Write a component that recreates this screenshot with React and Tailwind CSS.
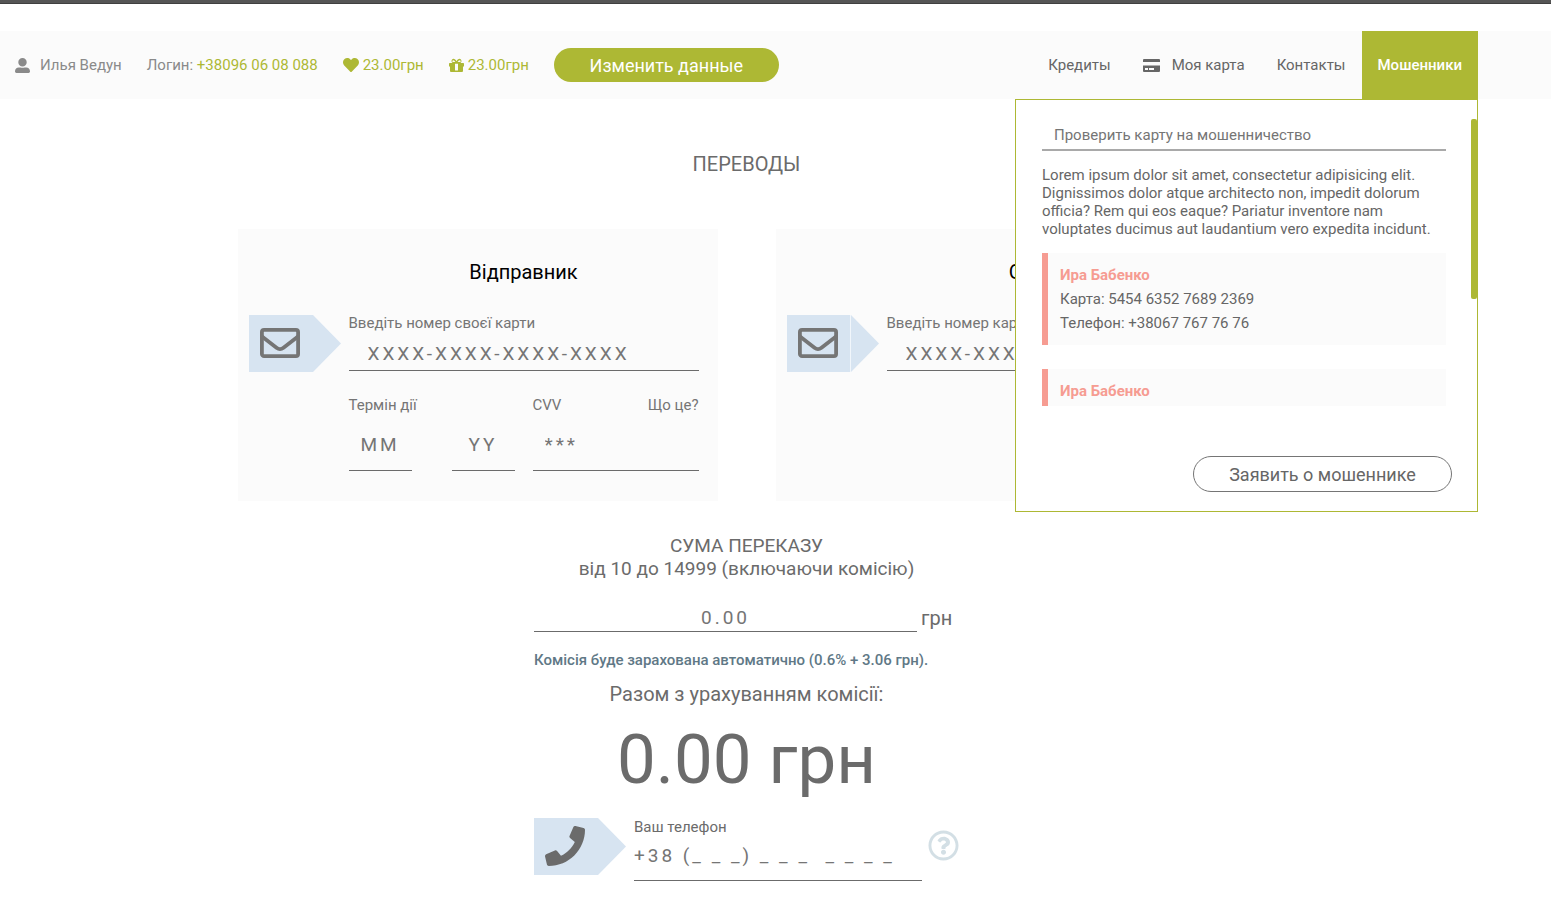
import { FaUserAlt, FaHeart, FaPhone, FaRegQuestionCircle } from "react-icons/fa";

const fieldClass =
  "block w-full border-b border-[#6b6b6b] bg-transparent text-[19px] leading-6 tracking-[3px] text-[#6b6b6b] outline-none placeholder:text-[#757575]";

function CardIcon() {
  return (
    <svg className="h-[13px] w-[17px]" viewBox="0 0 17 13" fill="currentColor" aria-hidden="true">
      <path d="M1 0h15a1 1 0 0 1 1 1v2H0V1a1 1 0 0 1 1-1Z" />
      <path
        fillRule="evenodd"
        d="M0 6.500h17V12a1 1 0 0 1-1 1H1a1 1 0 0 1-1-1ZM2 9v2h3V9ZM6 9v2h5V9Z"
      />
    </svg>
  );
}

function GiftIcon() {
  return (
    <svg className="size-[15px]" viewBox="0 0 15 15" fill="currentColor" aria-hidden="true">
      <path
        fillRule="evenodd"
        d="M.7 5H3.600A2.300 2.300 0 0 1 4.200.8C5.800.8 6.800 2 7.500 3.200 8.200 2 9.200.8 10.800.8A2.300 2.300 0 0 1 11.400 5H14.300a.7.7 0 0 1 .7.7V8.500H14V13a1 1 0 0 1-1 1H2a1 1 0 0 1-1-1V8.500H0V5.700A.7.7 0 0 1 .7 5ZM4.300 2.200a.9.9 0 0 0 0 1.900H6.500C5.800 3 5.100 2.200 4.300 2.200ZM10.700 2.200C9.900 2.200 9.200 3 8.500 4.100H10.700a.9.9 0 0 0 0-1.900ZM6 5.800V12a.6.6 0 0 0 .6.6H8.400A.6.6 0 0 0 9 12V5.800Z"
      />
    </svg>
  );
}

function EnvelopeIcon({ className }) {
  return (
    <svg className={className} viewBox="0 0 40 40" fill="none" stroke="currentColor" strokeWidth="3.800" aria-hidden="true">
      <rect x="1.900" y="6.900" width="36.200" height="26.200" rx="2.200" />
      <path d="M2 13.500L16.500 24.800Q20 27.500 23.500 24.800L38 13.500" />
    </svg>
  );
}

function ArrowBadge({ icon: Icon, seam = false, tone = "text-[#757575]" }) {
  return (
    <div className="grid h-[57px] w-[92px] shrink-0 items-start">
      <svg className="col-start-1 row-start-1 h-full w-full" viewBox="0 0 92 57" fill="#d7e4f1" aria-hidden="true">
        <path d="M0 0H64L92 28.500L64 57H0Z" />
        {seam && <path d="M63.500 0V57" stroke="#f1f6fb" strokeWidth="1" />}
      </svg>
      <Icon className={`col-start-1 row-start-1 mt-2 ml-[11px] size-10 ${tone}`} />
    </div>
  );
}

function TransferCard({ id, title, label, seam, children }) {
  return (
    <section className="flex w-[480px] bg-[#fbfbfb] pt-[31px] pr-[19px] pb-[30px] pl-[11px]">
      <div className="pt-[55px]">
        <ArrowBadge icon={EnvelopeIcon} seam={seam} />
      </div>
      <div className="ml-2 grow">
        <h2 className="text-center text-[20px] leading-6 text-black">{title}</h2>
        <label htmlFor={id} className="mt-[30px] block text-[15px] leading-[18px] text-[#757575]">
          {label}
        </label>
        <input id={id} placeholder="XXXX-XXXX-XXXX-XXXX" className={`${fieldClass} h-[39px] pt-[5px] pl-[19px]`} />
        {children}
      </div>
    </section>
  );
}

function Suspect({ name, card, phone }) {
  return (
    <li className="border-l-[6px] border-[#f69c92] bg-[#fbfbfb] py-[10px] pl-3 leading-6">
      <p className="font-bold text-[#f69c92]">{name}</p>
      <p>Карта: {card}</p>
      <p>Телефон: {phone}</p>
    </li>
  );
}

function FraudPanel() {
  return (
    <div className="absolute top-full right-0 z-10 w-[463px] border border-[#adb834] bg-white pt-[19px] pb-[19px] text-[15px] text-[#666]">
      <div className="h-[287px] overflow-hidden pr-[31px] pl-[26px]">
        <input
          aria-label="Проверить карту на мошенничество"
          placeholder="Проверить карту на мошенничество"
          className="block h-8 w-full border-b-2 border-[#a9a9a9] px-3 pt-[2px] outline-none placeholder:text-[#757575]"
        />
        <p className="mt-[15px] leading-[18px]">
          Lorem ipsum dolor sit amet, consectetur adipisicing elit. Dignissimos dolor atque architecto non, impedit
          dolorum officia? Rem qui eos eaque? Pariatur inventore nam voluptates ducimus aut laudantium vero expedita
          incidunt.
        </p>
        <ul className="mt-[15px] flex flex-col gap-6">
          <Suspect name="Ира Бабенко" card="5454 6352 7689 2369" phone="+38067 767 76 76" />
          <Suspect name="Ира Бабенко" card="5454 6352 7689 2369" phone="+38067 767 76 76" />
        </ul>
      </div>
      <div className="absolute top-[19px] right-0 h-[180px] w-[6px] rounded-[2px] bg-[#adb834]" />
      <div className="mt-[50px] flex justify-end pr-[25px]">
        <button type="button" className="h-9 w-[259px] rounded-full border border-[#757575] text-[18px] text-[#666]">
          Заявить о мошеннике
        </button>
      </div>
    </div>
  );
}

function Header() {
  return (
    <header className="mt-[27px] bg-[#fbfbfb] text-[15px]">
      <div className="mr-[58px] flex h-[68px] items-center justify-between px-[15px]">
        <div className="flex items-center gap-[25px] text-[#8a8a8a]">
          <span className="flex items-center gap-[10px]">
            <FaUserAlt className="size-[15px]" />
            Илья Ведун
          </span>
          <span>
            Логин: <a href="#login" className="text-[#adb834]">+38096 06 08 088</a>
          </span>
          <span className="flex items-center gap-1 text-[#adb834]">
            <FaHeart className="size-4" />
            23.00грн
          </span>
          <span className="flex items-center gap-1 text-[#adb834]">
            <GiftIcon />
            23.00грн
          </span>
          <button type="button" className="h-[34px] w-[225px] rounded-full bg-[#adb834] text-[18px] text-white">
            Изменить данные
          </button>
        </div>
        <nav className="relative flex h-full items-stretch text-[#666]">
          <a href="#credits" className="flex items-center px-4">Кредиты</a>
          <a href="#card" className="flex items-center gap-3 px-4">
            <CardIcon />
            Моя карта
          </a>
          <a href="#contacts" className="flex items-center px-4">Контакты</a>
          <button type="button" aria-expanded="true" className="bg-[#adb834] px-4 font-medium text-white">
            Мошенники
          </button>
          <FraudPanel />
        </nav>
      </div>
    </header>
  );
}

export default function App() {
  return (
    <div className="min-h-screen bg-white pb-4 font-[Roboto,sans-serif] text-[#6b6b6b]">
      <div className="h-1 border-b border-[#3f3f3f] bg-[#555]" />
      <Header />
      <main className="mr-[58px] flex flex-col items-center">
        <h1 className="mt-[53px] text-[20px] leading-6">ПЕРЕВОДЫ</h1>

        <div className="mt-[53px] flex items-stretch gap-[58px]">
          <TransferCard id="sender-card" title="Відправник" label="Введіть номер своєї карти">
            <div className="mt-[25px] flex text-[15px] leading-[18px] text-[#757575]">
              <fieldset className="w-[166px] shrink-0">
                <legend>Термін дії</legend>
                <div className="flex justify-between">
                  <div className="w-[63px]">
                    <input aria-label="Місяць" placeholder="MM" className={`${fieldClass} h-[57px] pt-[5px] text-center`} />
                  </div>
                  <div className="w-[63px]">
                    <input aria-label="Рік" placeholder="YY" className={`${fieldClass} h-[57px] pt-[5px] text-center`} />
                  </div>
                </div>
              </fieldset>
              <div className="ml-[18px] min-w-0 grow">
                <div className="flex justify-between">
                  <label htmlFor="cvv">CVV</label>
                  <a href="#cvv-help">Що це?</a>
                </div>
                <input id="cvv" placeholder="***" className={`${fieldClass} h-[57px] pt-[5px] pl-3`} />
              </div>
            </div>
          </TransferCard>
          <TransferCard id="receiver-card" title="Одержувач" label="Введіть номер карти" seam />
        </div>

        <section className="mt-[33px] w-[425px]">
          <h2 className="text-center text-[19px] leading-[23px]">
            СУМА ПЕРЕКАЗУ
            <br />
            від 10 до 14999 (включаючи комісію)
          </h2>
          <div className="mt-[22px] flex items-center gap-1">
            <div className="w-[383px]">
              <input id="amount" placeholder="0.00" className={`${fieldClass} h-[30px] pt-[2px] text-center`} />
            </div>
            <label htmlFor="amount" className="pt-[2px] text-[20px] leading-6">грн</label>
          </div>
          <p className="mt-[19px] text-[15px] leading-[18px] font-medium text-[#607886]">
            Комісія буде зарахована автоматично (0.6% + 3.06 грн).
          </p>
          <p className="mt-[13px] text-center text-[20px] leading-6">Разом з урахуванням комісії:</p>
          <p className="mt-[14px] text-center text-[69px] leading-[80px]">0.00 грн</p>

          <div className="mt-[18px] flex">
            <ArrowBadge icon={FaPhone} tone="text-[#6b6b6b]" />
            <div className="ml-2 w-[288px]">
              <label htmlFor="phone" className="block text-[15px] leading-[18px]">Ваш телефон</label>
              <input id="phone" placeholder="+38 (_ _ _) _ _ _  _ _ _ _" className={`${fieldClass} h-[45px] pb-[5px]`} />
            </div>
            <button type="button" aria-label="Допомога" className="ml-[6px] h-[55px] text-[#d3dfe5]">
              <FaRegQuestionCircle className="size-[31px]" />
            </button>
          </div>
        </section>
      </main>
    </div>
  );
}
